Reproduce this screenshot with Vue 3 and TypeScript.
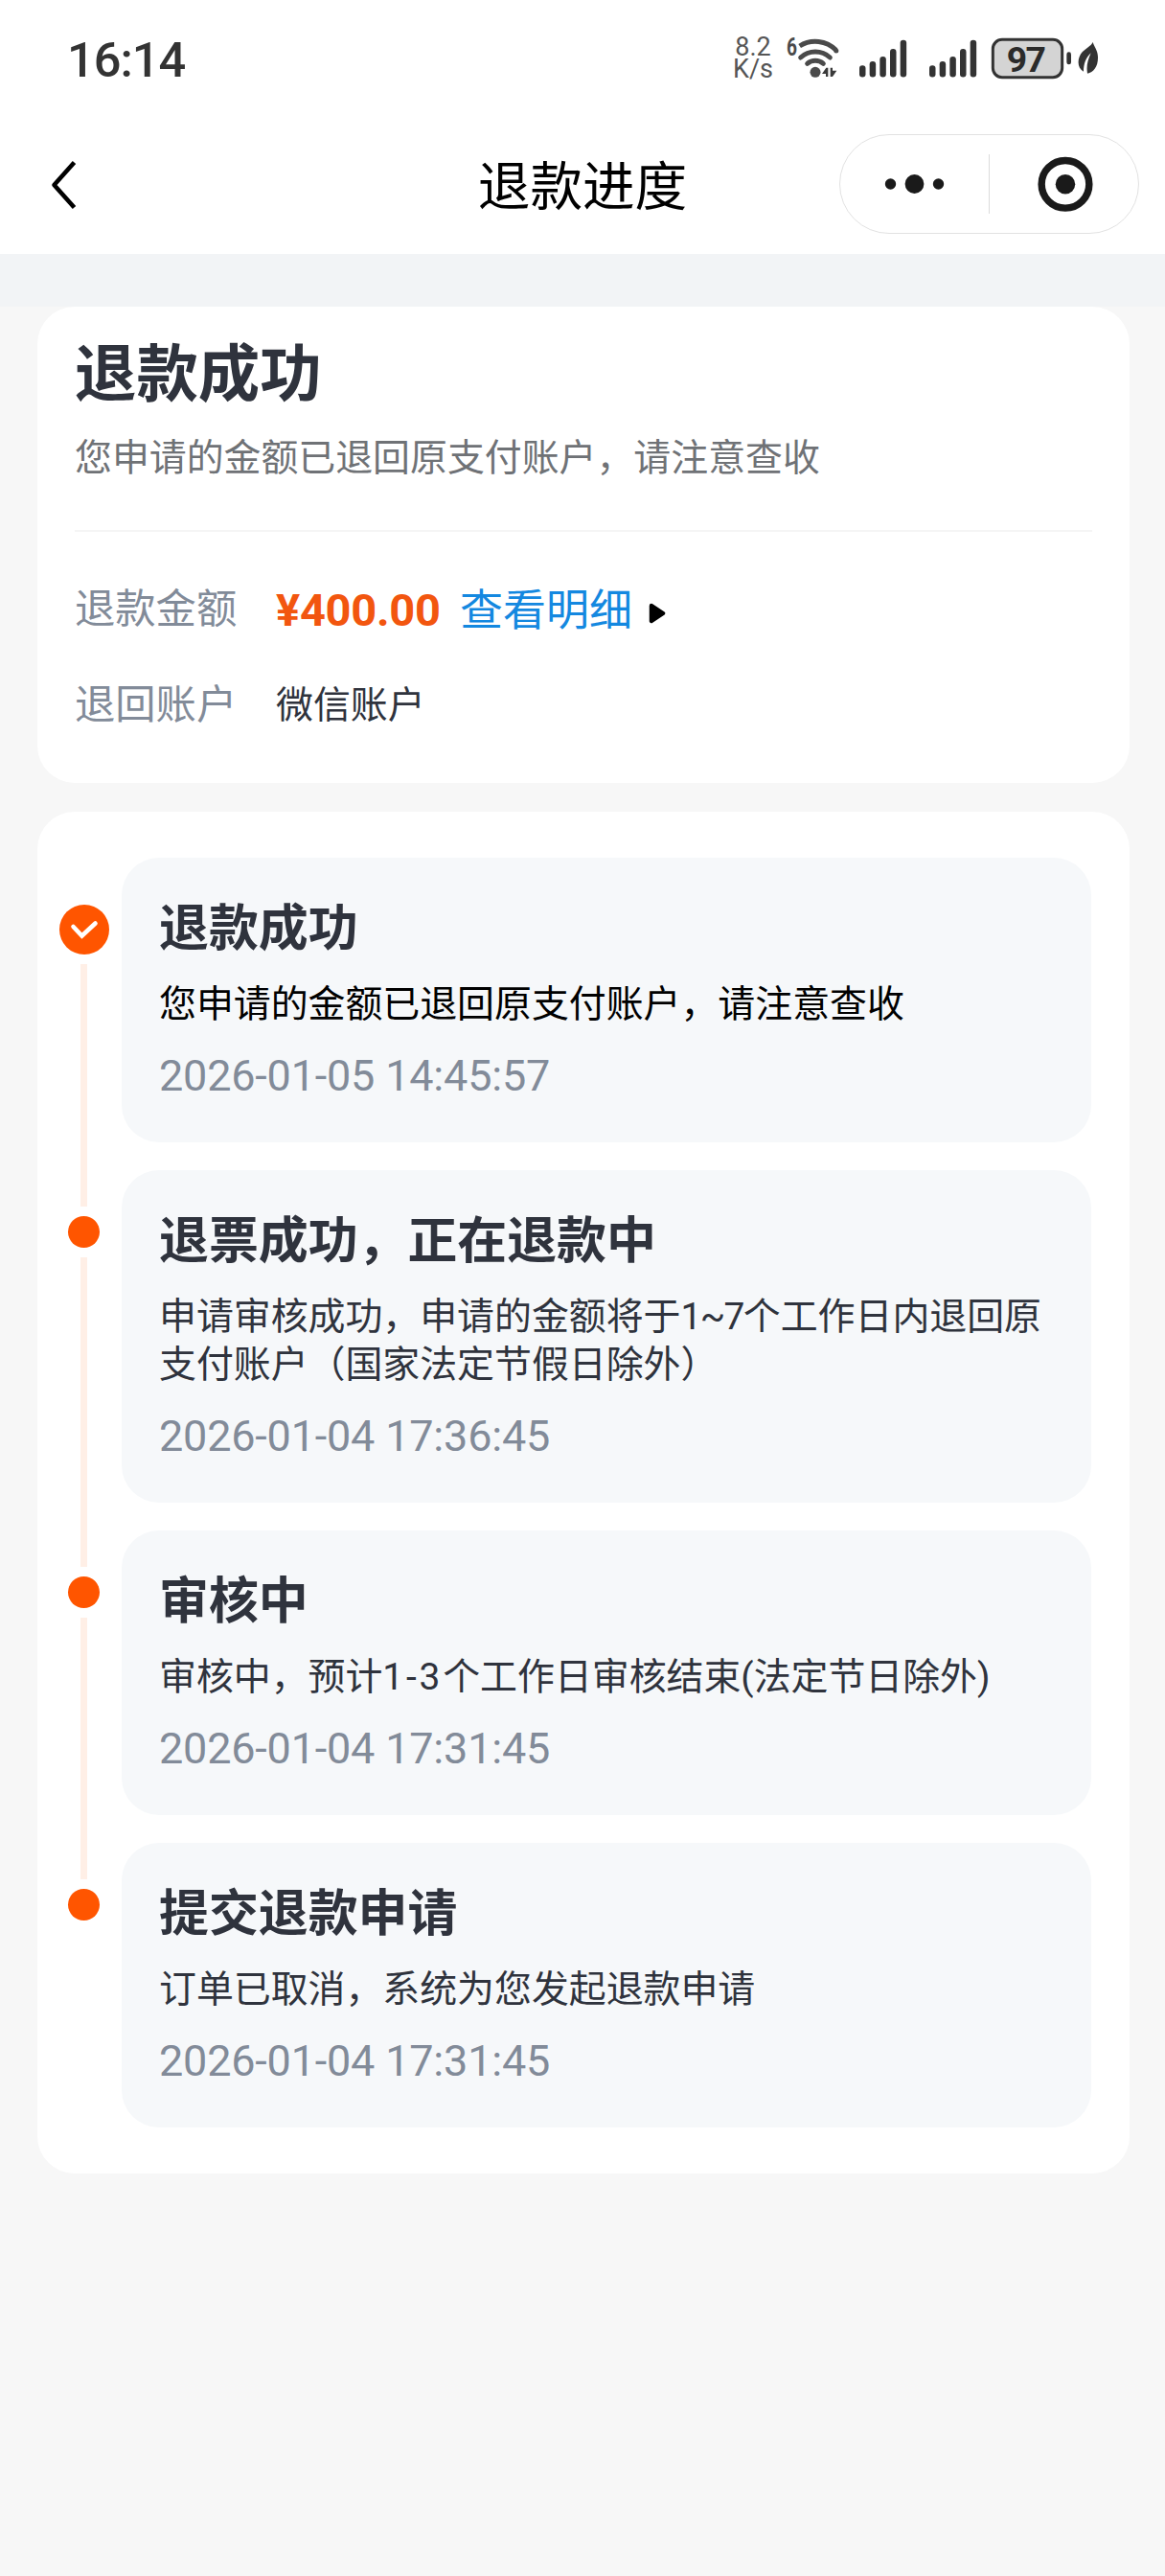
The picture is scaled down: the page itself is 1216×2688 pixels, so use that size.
<script setup lang="ts">
interface Segment {
  text: string
  kind?: 'range-tilde' | 'range-hyphen'
}

interface Step {
  title: string
  desc: Segment[]
  time: string
  current?: boolean
}

const steps: Step[] = [
  {
    title: '退款成功',
    desc: [{ text: '您申请的金额已退回原支付账户，请注意查收' }],
    time: '2026-01-05 14:45:57',
    current: true,
  },
  {
    title: '退票成功，正在退款中',
    desc: [
      { text: '申请审核成功，申请的金额将于' },
      { text: '1~7', kind: 'range-tilde' },
      { text: '个工作日内退回原支付账户（国家法定节假日除外）' },
    ],
    time: '2026-01-04 17:36:45',
  },
  {
    title: '审核中',
    desc: [
      { text: '审核中，预计' },
      { text: '1-3', kind: 'range-hyphen' },
      { text: '个工作日审核结束(法定节日除外)' },
    ],
    time: '2026-01-04 17:31:45',
  },
  {
    title: '提交退款申请',
    desc: [{ text: '订单已取消，系统为您发起退款申请' }],
    time: '2026-01-04 17:31:45',
  },
]

const bars = [
  { x: 3, y: 97 },
  { x: 35, y: 84 },
  { x: 67, y: 69 },
  { x: 99, y: 45 },
  { x: 131, y: 17 },
]
</script>

<template>
  <div class="page" lang="zh-CN">
    <header class="top">
      <div class="status">
        <span class="clock">16:14</span>
        <div class="indicators">
          <div class="speed"><span>8.2</span><span>K/s</span></div>
          <svg class="wifi" width="57" height="48" viewBox="240 78 171 144">
            <text x="243" y="144" font-size="76" font-weight="700" textLength="33" lengthAdjust="spacingAndGlyphs" fill="#4a4a4a">6</text>
            <g fill="none" stroke="#4a4a4a" stroke-width="15">
              <path d="M284 114A92 92 0 0 1 398 127" />
              <path d="M287 150A67.6 67.6 0 0 1 379 150" stroke-linecap="round" />
              <path d="M308 169A38.6 38.6 0 0 1 358 169" stroke-linecap="round" />
            </g>
            <circle cx="398.500" cy="129" r="7.500" fill="#4a4a4a" />
            <circle cx="333" cy="196" r="16.500" fill="#4a4a4a" />
            <path d="M354 201L367 182H373V210H366V201ZM380 182H387V191H400L387 210H380Z" fill="#3a3a3a" />
          </svg>
          <svg v-for="n in 2" :key="n" class="signal" width="51" height="48" viewBox="0 0 153 144">
            <rect v-for="b in bars" :key="b.x" :x="b.x" :y="b.y" width="19.500" :height="133.5 - b.y" rx="9.500" fill="#333" />
          </svg>
          <svg class="battery" width="85" height="48" viewBox="882 78 255 144">
            <rect x="889" y="94" width="217" height="118" rx="29" fill="#d4d4d4" stroke="#333" stroke-width="9" />
            <rect x="1120" y="133" width="14" height="39" rx="7" fill="#333" />
            <text x="932" y="195" font-size="112" font-weight="700" textLength="124" fill="#2b2b2b">97</text>
          </svg>
          <svg class="leaf" width="22" height="48" viewBox="1155 78 66 144">
            <path d="M1202 102C1206 116 1218 128 1218 150C1218 180 1204 196 1185 200C1181 178 1186 158 1196 136C1180 151 1173 170 1173 194C1150 180 1154 150 1169 133C1180 121 1196 115 1202 102Z" fill="#333" />
          </svg>
        </div>
      </div>
      <nav class="nav">
        <svg class="back" width="32" height="56" viewBox="0 0 32 56">
          <path d="M27.500 4.500L6.500 28L27.500 51.500" fill="none" stroke="#000" stroke-width="4.600" stroke-linejoin="round" />
        </svg>
        <h1 class="nav-title">退款进度</h1>
        <div class="capsule">
          <svg class="more" width="155" height="62" viewBox="0 0 155 62">
            <g fill="#1a1a1a">
              <circle cx="52.500" cy="31" r="5.700" />
              <circle cx="77.500" cy="31" r="9.900" />
              <circle cx="102.500" cy="31" r="5.700" />
            </g>
          </svg>
          <svg class="close" width="155" height="62" viewBox="0 0 155 62">
            <circle cx="79.500" cy="31.300" r="25" fill="none" stroke="#1a1a1a" stroke-width="7.500" />
            <circle cx="79.500" cy="31.300" r="10.300" fill="#1a1a1a" />
          </svg>
        </div>
      </nav>
    </header>
    <div class="band"></div>

    <main class="content">
      <section class="summary">
        <h2 class="summary-title">退款成功</h2>
        <p class="summary-desc">您申请的金额已退回原支付账户，请注意查收</p>
        <div class="rows">
          <div class="row">
            <span class="label">退款金额</span>
            <span class="amount">¥400.00</span>
            <a class="detail">查看明细</a>
            <svg class="caret" width="18" height="22" viewBox="0 0 18 22">
              <path d="M3 3L15 11L3 19Z" stroke="#000" stroke-width="4.500" stroke-linejoin="round" />
            </svg>
          </div>
          <div class="row">
            <span class="label">退回账户</span>
            <span class="account">微信账户</span>
          </div>
        </div>
      </section>

      <section class="timeline">
        <div v-for="(step, i) in steps" :key="i" class="step">
          <div class="rail">
            <template v-if="step.current">
              <svg class="check" width="52" height="52" viewBox="0 0 52 52">
                <circle cx="26" cy="26" r="26" fill="#ff5500" />
                <path d="M14.500 23L23.500 32.500L37.500 19.500" fill="none" stroke="#fff" stroke-width="4.600" stroke-linecap="round" />
              </svg>
            </template>
            <template v-else>
              <i class="lead"></i>
              <i class="dot"></i>
            </template>
            <i v-if="i < steps.length - 1" class="line"></i>
          </div>
          <article class="card">
            <h3 class="card-title">{{ step.title }}</h3>
            <p class="card-desc" :class="{ strong: step.current }"><span v-for="(s, k) in step.desc" :key="k" :class="s.kind">{{ s.text }}</span></p>
            <time class="card-time">{{ step.time }}</time>
          </article>
        </div>
      </section>
    </main>
  </div>
</template>

<style>
body {
  background: #f7f7f7;
}
</style>

<style scoped>
.page {
  width: 1216px;
  min-height: 2688px;
  background: #f7f7f7;
  font-family: Roboto, 'Noto Sans CJK SC', sans-serif;
  color: #2f333d;
}
.page * {
  box-sizing: border-box;
}
h1, h2, h3, p {
  margin: 0;
}
svg {
  display: block;
  flex: none;
}
.top {
  height: 265px;
  background: #fff;
}
.status {
  height: 120px;
  display: flex;
  justify-content: space-between;
  align-items: center;
  padding: 0 69px 0 70px;
}
.clock {
  font-size: 50.5px;
  font-weight: 500;
  letter-spacing: -1px;
  line-height: 60px;
  color: #333;
  padding-top: 6px;
}
.indicators {
  display: flex;
  align-items: center;
}
.speed {
  display: flex;
  flex-direction: column;
  width: 44px;
  align-items: center;
  font-size: 27px;
  line-height: 23px;
  color: #555;
  margin: 2px 12px 0 0;
}
.wifi {
  margin-right: 19px;
}
.signal {
  margin-right: 22px;
}
.battery {
  margin: 0 6px 0 -8px;
}
.nav {
  height: 145px;
  display: grid;
  grid-template-columns: 1fr auto 1fr;
  align-items: center;
  padding: 0 27px 0 50px;
}
.nav-title {
  margin-right: 23px;
  padding-top: 4px;
  font-size: 54.6px;
  font-weight: 400;
  line-height: 72px;
  color: #000;
}
.capsule {
  justify-self: end;
  display: flex;
  align-items: center;
  width: 313px;
  height: 104px;
  margin-top: -1px;
  border: 1px solid #e2e2e2;
  border-radius: 52px;
}
.close {
  border-left: 1px solid #dcdcdc;
}
.band {
  height: 55px;
  background: #f2f4f6;
}
.content {
  display: flex;
  flex-direction: column;
  gap: 30px;
  padding: 0 37px 0 39px;
}
.summary {
  background: #fff;
  border-radius: 39px;
  padding: 35px 39px 51px;
}
.summary-title {
  font-size: 64.4px;
  font-weight: 700;
  line-height: 72px;
}
.summary-desc {
  margin-top: 26px;
  font-size: 38.9px;
  line-height: 50px;
  color: #6f7276;
}
.rows {
  display: flex;
  flex-direction: column;
  gap: 40px;
  margin-top: 50px;
  padding-top: 51px;
  border-top: 2px solid #f5f5f5;
}
.row {
  display: flex;
  align-items: center;
  height: 60px;
  line-height: 60px;
}
.label {
  width: 210px;
  font-size: 42.3px;
  color: #828b99;
}
.amount {
  width: 192px;
  padding-top: 2px;
  font-size: 47px;
  font-weight: 700;
  letter-spacing: -0.3px;
  color: #f2560f;
}
.detail {
  padding-top: 3px;
  font-size: 45px;
  color: #1488e0;
}
.caret {
  margin: 7px 0 0 17px;
}
.account {
  font-size: 38.9px;
}
.timeline {
  background: #fff;
  border-radius: 39px;
  padding: 48px 40px 48px 22px;
}
.step {
  display: flex;
  gap: 13px;
}
.rail {
  display: flex;
  flex-direction: column;
  align-items: center;
  gap: 10px;
  width: 53px;
}
.check {
  margin-top: 49px;
}
.lead {
  width: 7px;
  height: 38px;
  background: #ffefe6;
}
.dot {
  width: 33px;
  height: 33px;
  border-radius: 50%;
  background: #ff5500;
}
.line {
  flex: 1;
  width: 7px;
  background: #ffefe6;
}
.card {
  flex: 1;
  padding: 43px 39px 44px;
  border-radius: 39px;
  background: #f6f8fa;
}
.step:not(:last-child) .card {
  margin-bottom: 29px;
}
.card-title {
  font-size: 51.9px;
  font-weight: 700;
  line-height: 64px;
}
.card-desc {
  margin-top: 21px;
  font-size: 38.9px;
  line-height: 50px;
}
.card-desc.strong {
  color: #000;
}
.range-tilde {
  letter-spacing: -1.6px;
}
.range-hyphen {
  letter-spacing: 2.8px;
}
.card-time {
  display: block;
  margin-top: 25px;
  font-size: 45px;
  line-height: 50px;
  letter-spacing: -0.2px;
  color: #828b99;
}
</style>
